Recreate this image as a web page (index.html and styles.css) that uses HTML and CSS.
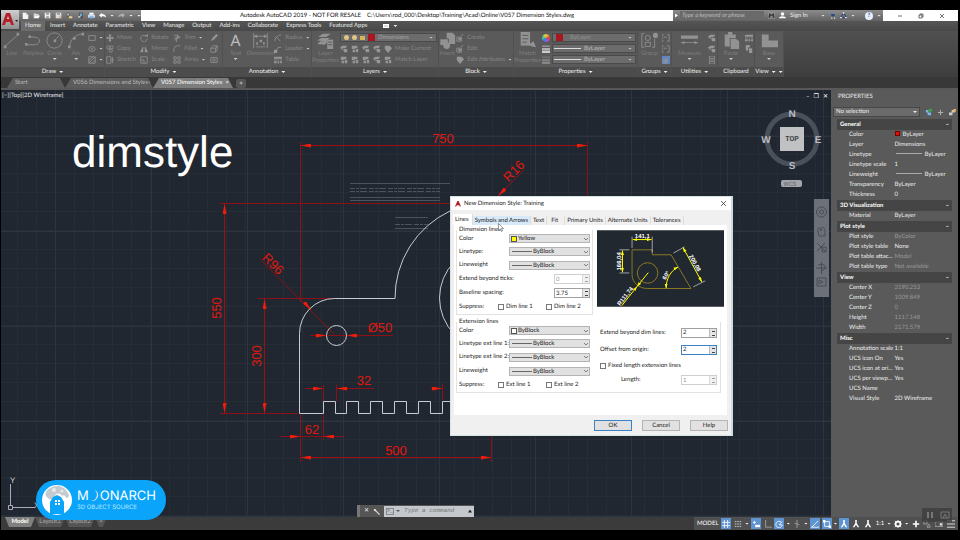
FILE: index.html
```html
<!DOCTYPE html>
<html lang="en">
<head>
<meta charset="utf-8">
<title>Autodesk AutoCAD 2019</title>
<link rel="stylesheet" href="styles.css">
</head>
<body>
<svg class="sprite" aria-hidden="true">
  <symbol id="i-new" viewBox="0 0 10 10"><path d="M1 1h5l3 3v6H1z" fill="#f4f4f4"/><path d="M6 1v3h3" fill="#aaa"/></symbol>
  <symbol id="i-open" viewBox="0 0 10 10"><path d="M1 2h3l1 1h3v2H3L1 9z" fill="#ddd"/><path d="M3 5h7L8 9H1z" fill="#fff"/></symbol>
  <symbol id="i-save" viewBox="0 0 10 10"><path d="M1 1h8v8H1z" fill="#eee"/><path d="M3 1h4v3H3zM3 6h4v3H3z" fill="#999"/></symbol>
  <symbol id="i-saveas" viewBox="0 0 10 10"><path d="M1 1h8v8H1z" fill="#ddd"/><path d="M3 1h4v3H3z" fill="#999"/><path d="M5 8l4-4 1 1-4 4z" fill="#d7a46c"/></symbol>
  <symbol id="i-web" viewBox="0 0 10 10"><path d="M1 1h4v6H1z" fill="#555"/><path d="M4 6h5v3H4z" fill="#e8c890"/><path d="M2 2h2v3H2z" fill="#ddd"/></symbol>
  <symbol id="i-mobile" viewBox="0 0 10 10"><path d="M3 1h5v8H3z" fill="#444"/><path d="M4 2h3v4H4z" fill="#70aee0"/><path d="M2 6h3v2H2z" fill="#eee"/></symbol>
  <symbol id="i-print" viewBox="0 0 10 10"><path d="M2 1h6v3H2z" fill="#fff"/><path d="M0 4h10v4H0z" fill="#d5dde8"/><path d="M2 6h6v3H2z" fill="#7eb0e8"/></symbol>
  <symbol id="i-undo" viewBox="0 0 10 10"><path d="M0 5l4-4v2c4 0 6 2 6 5-2-2-3-2-6-2v2z" fill="currentColor"/></symbol>
  <symbol id="i-line" viewBox="0 0 20 20"><path d="M2 17L18 3" class="st"/><path d="M1 16h3v3H1zM16 1h3v3h-3z" class="fl"/></symbol>
  <symbol id="i-pline" viewBox="0 0 20 20"><path d="M1 15h10c8 0 8-9 0-9H6" class="st"/><path d="M0 13h3v3H0zM4 4h3v3H4z" class="fl"/></symbol>
  <symbol id="i-circle" viewBox="0 0 20 20"><circle cx="10" cy="10" r="9" class="st"/><path d="M10 10l5-5" class="st"/><path d="M9 9h3v3H9z" class="fl"/></symbol>
  <symbol id="i-arc" viewBox="0 0 20 20"><path d="M2 18C2 9 8 3 18 2" class="st"/><path d="M0 16h3v3H0zM6 6h3v3H6zM16 1h3v3h-3z" class="fl"/></symbol>
  <symbol id="i-rect" viewBox="0 0 10 10"><path d="M1 2h8v6H1z" class="st"/></symbol>
  <symbol id="i-ellipse" viewBox="0 0 10 10"><ellipse cx="5" cy="5" rx="4" ry="3" class="st"/><path d="M4 4h2v2H4z" class="fl"/></symbol>
  <symbol id="i-hatch" viewBox="0 0 10 10"><path d="M1 1h8v8H1zM1 6l5-5M1 9l8-8M5 9l4-4" class="st"/></symbol>
  <symbol id="i-move" viewBox="0 0 10 10"><path d="M5 0l2 2H6v2h2V3l2 2-2 2V6H6v2h1l-2 2-2-2h1V6H2v1L0 5l2-2v1h2V2H3z" class="fl"/></symbol>
  <symbol id="i-copy" viewBox="0 0 10 10"><circle cx="3" cy="3" r="2" class="st"/><circle cx="7" cy="3" r="2" class="st"/><circle cx="6" cy="7" r="2" class="st"/></symbol>
  <symbol id="i-stretch" viewBox="0 0 10 10"><path d="M1 1h5v8H1zM6 5h4M8 1v8" class="st"/></symbol>
  <symbol id="i-rotate" viewBox="0 0 10 10"><path d="M8 3a4 4 0 1 0 1 3" class="st"/><path d="M6 3h4V0z" class="fl"/></symbol>
  <symbol id="i-mirror" viewBox="0 0 10 10"><path d="M4 1v8H0zM6 1v8h4z" class="fl"/></symbol>
  <symbol id="i-scale" viewBox="0 0 10 10"><path d="M1 1h8v8H1zM1 5h4v4" class="st"/></symbol>
  <symbol id="i-trim" viewBox="0 0 10 10"><path d="M1 1l8 3M1 5h8M6 0L4 10M2 8l6-5" class="st"/></symbol>
  <symbol id="i-fillet" viewBox="0 0 10 10"><path d="M1 9V6c0-3 2-5 5-5h3" class="st"/></symbol>
  <symbol id="i-array" viewBox="0 0 10 10"><path d="M1 1h3v3H1zM6 1h3v3H6zM1 6h3v3H1zM6 6h3v3H6z" class="st"/></symbol>
  <symbol id="i-erase" viewBox="0 0 10 10"><path d="M1 9l2-4 5-5 2 2-5 5z" class="fl"/></symbol>
  <symbol id="i-box" viewBox="0 0 10 10"><path d="M1 4h6v5H1zM1 4l3-3h5v5L7 9M7 4l2-3" class="st"/></symbol>
  <symbol id="i-offset" viewBox="0 0 10 10"><path d="M1 2h8v6H1zM3 4h4M3 6h4" class="st"/></symbol>
  <symbol id="i-dim" viewBox="0 0 20 20"><path d="M2 1v18M18 1v18M2 5h16" class="st"/><path d="M2 5l4-2v4zM18 5l-4-2v4zM5 12h2v3H5zM9 9h3v3H9zM13 12h2v3h-2zM5 17h11v1H5z" class="fl"/></symbol>
  <symbol id="i-leader" viewBox="0 0 10 10"><path d="M2 8l3-5h4" class="st"/><path d="M0 6h4v4H0z" class="fl"/></symbol>
  <symbol id="i-radius" viewBox="0 0 10 10"><path d="M1 9c0-4 3-7 8-8M2 3l6 6" class="st"/></symbol>
  <symbol id="i-table" viewBox="0 0 10 10"><path d="M0 1h10v8H0z" class="fl"/><path d="M0 4h10M0 6h10M4 4v5M7 4v5" stroke="#555"/></symbol>
  <symbol id="i-layers" viewBox="0 0 20 20"><path d="M1 6l6-4h9l-5 4zM0 10l5-3h10l-4 4zM0 14l4-3h9l-4 4z" class="fl"/><path d="M12 9h7v11h-7z" class="fl"/><path d="M13 12h5M13 15h5" stroke="#555"/></symbol>
  <symbol id="i-lay" viewBox="0 0 10 10"><path d="M0 3l3-2h6L7 4H3v3z" class="fl"/><path d="M4 5h5v4H5z" class="fl"/></symbol>
  <symbol id="i-lay2" viewBox="0 0 10 10"><path d="M1 1h7v3H6L4 5H1z" class="fl"/><path d="M2 6h3v3H2zM6 5h3v4H6z" class="fl"/></symbol>
  <symbol id="i-insert" viewBox="0 0 20 20"><path d="M9 1h7l3 3v10H9z" class="fl"/><path d="M1 8h10v8H1z" class="fl" stroke="#555"/><circle cx="9" cy="16" r="4" class="fl"/></symbol>
  <symbol id="i-create" viewBox="0 0 10 10"><path d="M1 4h6v5H1zM6 3l3-3" class="st"/><path d="M3 5h3v3H3z" class="fl"/></symbol>
  <symbol id="i-tag" viewBox="0 0 10 10"><path d="M1 1h6l3 3-5 6-4-5z" class="fl"/></symbol>
  <symbol id="i-match" viewBox="0 0 20 20"><path d="M2 0h11v16H2z" class="fl"/><path d="M4 4h7M4 8h7M4 12h5" stroke="#555"/><path d="M11 15l6-4 3 7-5-1z" class="fl"/></symbol>
  <symbol id="i-wheel" viewBox="0 0 10 10"><path d="M5 5V0a5 5 0 0 1 4.300 2.500z" fill="#f3a73b"/><path d="M5 5l4.300-2.500a5 5 0 0 1 0 5z" fill="#e5483c"/><path d="M5 5l4.300 2.500A5 5 0 0 1 5 10z" fill="#b84bd0"/><path d="M5 5v5a5 5 0 0 1-4.300-2.500z" fill="#3c7be8"/><path d="M5 5L.7 7.500a5 5 0 0 1 0-5z" fill="#3cc3a6"/><path d="M5 5L.7 2.500A5 5 0 0 1 5 0z" fill="#b9db4a"/></symbol>
  <symbol id="i-bars" viewBox="0 0 10 10"><path d="M0 1h10v1H0zM0 4h10v2H0zM0 7h10v3H0z" class="fl"/></symbol>
  <symbol id="i-group" viewBox="0 0 20 20"><path d="M4 2H1v16h3M13 18h3V8" class="st"/><circle cx="8" cy="7" r="3" class="st"/><path d="M5 12h6v5H5z" class="st"/><circle cx="17" cy="4" r="3" class="fl"/></symbol>
  <symbol id="i-brk" viewBox="0 0 10 10"><path d="M2 1H0v8h2M6 1h3v8H6M2 4h4" class="st"/></symbol>
  <symbol id="i-measure" viewBox="0 0 20 20"><path d="M0 4h20v4H0zM0 12h20v1H0z" class="fl"/><path d="M0 12.500l4-2v4zM20 12.500l-4-2v4z" class="fl"/></symbol>
  <symbol id="i-calc" viewBox="0 0 10 10"><path d="M2 0h6v10H2zM3 3h4M3 5h4M3 7h4" class="st"/></symbol>
  <symbol id="i-paste" viewBox="0 0 20 20"><path d="M2 3h4V0h5v3h4v4H8v10H2z" class="fl"/><path d="M9 8h6l4 3v9H9z" class="fl"/></symbol>
  <symbol id="i-cp" viewBox="0 0 10 10"><path d="M1 0h5v3H4v4H1z" class="fl"/><path d="M5 4h3l1 1v5H5z" class="fl"/></symbol>
  <symbol id="i-base" viewBox="0 0 20 20"><path d="M1 3h8v7h11v8H1z" class="fl"/></symbol>
  <symbol id="i-chev" viewBox="0 0 6 6"><path d="M1 2l2 2 2-2" fill="none" stroke="#666" stroke-width=".8"/></symbol>
  <symbol id="i-person" viewBox="0 0 10 10"><circle cx="5" cy="3" r="2.500" fill="#fff"/><path d="M0 9c0-4 10-4 10 0z" fill="#fff"/></symbol>
  <symbol id="i-binoc" viewBox="0 0 10 10"><path d="M1 1h3v2h2V1h3l1 8H6V6H4v3H0z" fill="#3a3a3a" stroke="#ddd" stroke-width=".6"/></symbol>
  <symbol id="i-cart" viewBox="0 0 10 10"><path d="M0 1h2l1 1h7L8 7H3L2 3z" fill="#2f4b6d" stroke="#ccc" stroke-width=".5"/><circle cx="4" cy="9" r="1" fill="#ddd"/><circle cx="8" cy="9" r="1" fill="#ddd"/></symbol>
  <symbol id="i-tri" viewBox="0 0 10 10"><path d="M5 1l4 7H1z" fill="none" stroke="#26466f" stroke-width="1.500"/><path d="M4 0h2v3H4zM0 7h3v2H0zM7 7h3v2H7z" fill="#ddd"/></symbol>
  <symbol id="i-ann" viewBox="0 0 10 10"><path d="M4 0h2v4l3 5H7L5 6 3 9H1l3-5z" fill="#fff"/></symbol>
</svg>

<div class="app">
  <header class="head">
    <button class="app-btn" aria-label="Application menu">
      <svg viewBox="0 0 18 18"><path d="M1 14L5 2h4l4 12h-3l-1-3H5l-1 3z" fill="#b3202b"/><path d="M6 8h2L7 5z" fill="#ddd"/><path d="M14 9h3l-1 2z" fill="#222"/></svg>
    </button>
    <div class="titlebar">
      <div class="qat">
        <svg><use href="#i-new"/></svg><svg><use href="#i-open"/></svg><svg><use href="#i-save"/></svg><svg><use href="#i-saveas"/></svg><svg><use href="#i-web"/></svg><svg><use href="#i-mobile"/></svg><svg><use href="#i-print"/></svg><svg><use href="#i-undo"/></svg><i class="dd"></i><svg class="off flip"><use href="#i-undo"/></svg><i class="dd"></i><i class="dd"></i>
      </div>
      <h1 class="doc-title"><span>Autodesk AutoCAD 2019 - NOT FOR RESALE</span><span>C:\Users\rod_000\Desktop\Training\Acad\Online\V057 Dimension Styles.dwg</span></h1>
      <div class="info">
        <i class="go"></i>
        <input class="keyword" aria-label="Search help" placeholder="Type a keyword or phrase">
        <svg><use href="#i-binoc"/></svg><svg><use href="#i-person"/></svg><span class="signin">Sign In</span><i class="dd"></i>
        <svg><use href="#i-cart"/></svg><svg><use href="#i-tri"/></svg><i class="dd"></i>
        <b class="help">?</b><i class="dd"></i>
      </div>
      <div class="winbtns">
        <button aria-label="Minimize"><svg viewBox="0 0 6 6"><path d="M1 3h4" class="wk"/></svg></button>
        <button aria-label="Restore"><svg viewBox="0 0 6 6"><path d="M1 2h3v3H1zM2 2V1h3v3H4" class="wk"/></svg></button>
        <button aria-label="Close"><svg viewBox="0 0 6 6"><path d="M1 1l4 4M5 1L1 5" class="wk"/></svg></button>
      </div>
    </div>
    <nav class="rtabs">
      <a class="on" href="#">Home</a><a href="#">Insert</a><a href="#">Annotate</a><a href="#">Parametric</a><a href="#">View</a><a href="#">Manage</a><a href="#">Output</a><a href="#">Add-ins</a><a href="#">Collaborate</a><a href="#">Express Tools</a><a href="#">Featured Apps</a><i class="cam"></i><i class="dd"></i>
    </nav>
  </header>

  <div class="ribbon">
    <section class="panel"><div class="tools">
      <button class="big"><svg><use href="#i-line"/></svg>Line</button>
      <button class="big"><svg><use href="#i-pline"/></svg>Polyline</button>
      <button class="big"><svg><use href="#i-circle"/></svg>Circle<i class="dd"></i></button>
      <button class="big"><svg><use href="#i-arc"/></svg>Arc<i class="dd"></i></button>
      <div class="col"><button><svg><use href="#i-rect"/></svg><i class="dd"></i></button><button><svg><use href="#i-ellipse"/></svg><i class="dd"></i></button><button><svg><use href="#i-hatch"/></svg><i class="dd"></i></button></div>
    </div><h2>Draw<i class="dd"></i></h2></section>
    <section class="panel"><div class="tools spread">
      <div class="col"><button><svg><use href="#i-move"/></svg>Move</button><button><svg><use href="#i-copy"/></svg>Copy</button><button><svg><use href="#i-stretch"/></svg>Stretch</button></div>
      <div class="col"><button><svg><use href="#i-rotate"/></svg>Rotate</button><button><svg><use href="#i-mirror"/></svg>Mirror</button><button><svg><use href="#i-scale"/></svg>Scale</button></div>
      <div class="col"><button><svg><use href="#i-trim"/></svg>Trim<i class="dd"></i></button><button><svg><use href="#i-fillet"/></svg>Fillet<i class="dd"></i></button><button><svg><use href="#i-array"/></svg>Array<i class="dd"></i></button></div>
      <div class="col"><button><svg><use href="#i-erase"/></svg></button><button><svg><use href="#i-box"/></svg></button><button><svg><use href="#i-offset"/></svg></button></div>
    </div><h2>Modify<i class="dd"></i></h2></section>
    <section class="panel"><div class="tools">
      <button class="big"><b class="glyph">A</b>Text<i class="dd"></i></button>
      <button class="big"><svg><use href="#i-dim"/></svg>Dimension</button>
      <div class="col"><button><svg><use href="#i-radius"/></svg>Radius<i class="dd"></i></button><button><svg><use href="#i-leader"/></svg>Leader<i class="dd"></i></button><button><svg><use href="#i-table"/></svg>Table</button></div>
    </div><h2>Annotation<i class="dd"></i></h2></section>
    <section class="panel"><div class="tools">
      <button class="big"><svg><use href="#i-layers"/></svg>Layer<br>Properties</button>
      <div class="col grow layers">
        <div class="rcombo layer"><i class="bulb"></i><i class="bulb"></i><i class="lock"></i><i class="red"></i><select aria-label="Layer"><option>Dimensions</option></select><i class="dd"></i></div>
        <div class="row"><svg><use href="#i-lay"/></svg><svg><use href="#i-lay2"/></svg><svg><use href="#i-lay"/></svg><svg><use href="#i-lay"/></svg><svg><use href="#i-tag"/></svg>Make Current</div>
        <div class="row"><svg><use href="#i-lay2"/></svg><svg><use href="#i-lay2"/></svg><svg><use href="#i-lay2"/></svg><svg><use href="#i-lay"/></svg><svg><use href="#i-lay2"/></svg>Match Layer</div>
      </div>
    </div><h2>Layers<i class="dd"></i></h2></section>
    <section class="panel"><div class="tools">
      <button class="big"><svg><use href="#i-insert"/></svg>Insert</button>
      <div class="col"><button><svg><use href="#i-create"/></svg>Create</button><button><svg><use href="#i-create"/></svg>Edit</button><button><svg><use href="#i-tag"/></svg>Edit Attributes<i class="dd"></i></button></div>
    </div><h2>Block<i class="dd"></i></h2></section>
    <section class="panel"><div class="tools">
      <button class="big"><svg><use href="#i-match"/></svg>Match<br>Properties</button>
      <div class="col lit"><svg><use href="#i-wheel"/></svg><svg><use href="#i-bars"/></svg><svg class="off"><use href="#i-bars"/></svg></div>
      <div class="col grow">
        <div class="rcombo"><i class="red"></i><select class="faint" aria-label="Object color"><option>ByLayer</option></select><i class="dd"></i></div>
        <div class="rcombo"><i class="rule"></i><select aria-label="Lineweight"><option>ByLayer</option></select><i class="dd"></i></div>
        <div class="rcombo"><i class="rule"></i><select aria-label="Linetype"><option>ByLayer</option></select><i class="dd"></i></div>
      </div>
    </div><h2>Properties<i class="dd"></i></h2></section>
    <section class="panel"><div class="tools">
      <button class="big"><svg><use href="#i-group"/></svg>Group</button>
      <div class="col"><button><svg><use href="#i-brk"/></svg></button><button><svg><use href="#i-brk"/></svg></button><button class="sel"><svg><use href="#i-create"/></svg></button></div>
    </div><h2>Groups<i class="dd"></i></h2></section>
    <section class="panel"><div class="tools">
      <button class="big"><svg><use href="#i-measure"/></svg>Measure<i class="dd"></i></button>
      <div class="col"><button><svg><use href="#i-lay"/></svg></button><button><svg><use href="#i-lay"/></svg></button><button><svg><use href="#i-calc"/></svg></button></div>
    </div><h2>Utilities<i class="dd"></i></h2></section>
    <section class="panel"><div class="tools">
      <button class="big"><svg><use href="#i-paste"/></svg>Paste<i class="dd"></i></button>
      <div class="col"><button><svg><use href="#i-table"/></svg></button><button><svg><use href="#i-cp"/></svg></button></div>
    </div><h2>Clipboard</h2></section>
    <section class="panel"><div class="tools">
      <button class="big"><svg><use href="#i-base"/></svg>Base<i class="dd"></i></button>
    </div><h2>View<i class="dd"></i><i class="dd"></i></h2></section>
  </div>

  <nav class="ftabs">
    <a class="t-start" href="#">Start</a>
    <a class="t-doc" href="#">V056 Dimensions and Styles<span>×</span></a>
    <a class="t-doc on" href="#">V057 Dimension Styles<span>×</span></a>
    <button aria-label="New tab">+</button>
  </nav>

  <main class="work">
    <div class="canvas">
      <svg class="model" viewBox="1 90 830 427" preserveAspectRatio="xMinYMin slice">
        <defs>
          <pattern id="minor" x="55" y="154" width="19" height="19" patternUnits="userSpaceOnUse"><path d="M.5 0v19M0 .5h19" stroke="#262d37" fill="none"/></pattern>
          <pattern id="major" x="55" y="136" width="96" height="95" patternUnits="userSpaceOnUse"><path d="M.5 0v95M0 .5h96" stroke="#2c353f" fill="none"/></pattern>
          <marker id="ar" viewBox="0 0 10 4" refX="10" refY="2" markerWidth="10" markerHeight="4" markerUnits="userSpaceOnUse" orient="auto-start-reverse"><path d="M0 0l10 2-10 2z" fill="#f01c0c"/></marker>
        </defs>
        <path d="M0 90h2000v1200H0z" fill="#212730"/>
        <path d="M0 90h2000v1200H0z" fill="url(#minor)"/>
        <path d="M0 90h2000v1200H0z" fill="url(#major)"/>
        <g class="ghost"><path d="M350 183.500h100M350 197.500h90M350 200.500h90M395 217.500h33M395 228.500h33"/><path d="M350 188.500h90M350 191.500h90M395 224.500h33" stroke-dasharray="5 1 3 1 7 2"/></g>
        <g class="ext">
          <path d="M300.500 142v160M587.500 142v60M220 203.500h230M220 413.500h78M258 298.500h77M300.500 415v47M323.500 415v25M323.500 385v16M336.500 385v16M442.500 384v16M491.500 434v28"/>
          <path d="M260 259l74 75M525 169l-24 24M310 335.500h83M305 388.500h18M336 388.500h38M431 388.500h12M280 436.500h63"/>
        </g>
        <g class="dim">
          <path d="M301 145.500h286" class="both"/><path d="M224.500 204v209" class="both"/><path d="M264.500 299v114" class="both"/><path d="M301 457.500h190" class="both"/>
          <path d="M304 302l7 8"/><path d="M315 335.500h11"/><path d="M358 335.500h-11"/><path d="M313 388.500h10"/><path d="M346 388.500h-9"/><path d="M432 388.500h10"/><path d="M290 436.500h10"/><path d="M334 436.500h-10"/><path d="M510 184l-12 12"/>
        </g>
        <g class="part">
          <path d="M450 401.500h-7.500v12h-12v-12h-12v12h-12v-12h-12v12h-12v-12h-12v12h-12v-12h-12v12h-11v-12h-12v12h-24V333.500a35 35 0 0 1 35-35h60.500A96 96 0 0 1 450 211"/>
          <circle cx="491" cy="298" r="51.500"/><circle cx="336.500" cy="335.500" r="10"/>
        </g>
        <g class="dimtext">
          <text x="443" y="143">750</text><text x="396" y="455">500</text><text x="312" y="434">62</text><text x="364" y="385">32</text><text x="380" y="332">Ø50</text>
          <text transform="translate(221 308) rotate(-90)">550</text><text transform="translate(261 356) rotate(-90)">300</text>
          <text transform="translate(270 267) rotate(45)">R96</text><text transform="translate(517 174) rotate(-45)">R16</text>
        </g>
        <text x="72" y="167" class="caption">dimstyle</text>
        <g class="ucs"><path d="M10.500 505v-21M13 507.500h22M8.500 505.500h4v4h-4z"/><text x="10" y="483">Y</text><text x="34" y="508">X</text></g>
      </svg>
      <span class="vp">[−][Top][2D Wireframe]</span>
      <div class="mdi"><span>‒</span><span>❐</span><span>✕</span></div>
      <svg class="cube" viewBox="0 0 62 82">
        <circle cx="31" cy="32" r="25" fill="none" stroke="#4a505a" stroke-width="5"/>
        <path d="M19 20h24v24H19z" fill="#bfc1c3"/>
        <g class="nesw"><text x="31" y="10">N</text><text x="31" y="62">S</text><text x="5" y="36">W</text><text x="57" y="36">E</text></g>
        <text x="31" y="34" class="top">TOP</text>
        <rect x="20" y="73" width="21" height="7" rx="2" fill="#a3a6ae"/><text x="29" y="79" class="wcs">WCS</text>
      </svg>
      <svg class="navbar" viewBox="0 0 15 98"><path d="M0 0h15v98H0z" fill="#6c7179"/><g fill="none" stroke="#474d56"><circle cx="7.500" cy="13" r="5"/><circle cx="7.500" cy="13" r="2"/><path d="M4 32c0-4 2-5 3 0 0-5 3-5 4 0v5H5zM3 44l8 8M11 44l-8 8M8 48h4v5H8zM7.500 63v12M2 69h11M4 66c8-3 10 4 3 6M3 79h9v8H3zM5 81l4 2-4 2z"/></g></svg>
      <div class="cmd">
        <i class="grip"></i><span class="x">✕</span><svg viewBox="0 0 8 8"><path d="M1 1l2 0 1 2 4 4-1 1-4-4-2-1z" fill="#ddd"/></svg>
        <label><i class="prompt">&gt;_</i><i class="dd"></i><input aria-label="Command" placeholder="Type a command"><i class="up"></i></label>
      </div>

      <form class="dialog" onsubmit="return false">
        <div class="dlg-title"><svg viewBox="0 0 10 10"><path d="M0 9L4 0h2l4 9H8L7 7H3L2 9z" fill="#b3202b"/></svg><span>New Dimension Style: Training</span><button class="close" aria-label="Close"><svg viewBox="0 0 6 6"><path d="M1 1l4 4M5 1L1 5" class="wk"/></svg></button></div>
        <div class="dlg-tabs"><button class="on">Lines</button><button class="hot">Symbols and Arrows</button><button>Text</button><button class="w">Fit</button><button>Primary Units</button><button>Alternate Units</button><button>Tolerances</button></div>
        <div class="page">
          <div class="upper">
            <fieldset class="rows3"><legend>Dimension lines</legend>
              <label for="c1">Color</label><div class="combo sw"><select id="c1"><option>Yellow</option></select><i class="yellow"></i><svg><use href="#i-chev"/></svg></div>
              <label for="c2">Linetype:</label><div class="combo ln"><select id="c2"><option>ByBlock</option></select><i></i><svg><use href="#i-chev"/></svg></div>
              <label for="c3">Lineweight</label><div class="combo ln"><select id="c3"><option>ByBlock</option></select><i></i><svg><use href="#i-chev"/></svg></div>
              <label for="n1">Extend beyond ticks:</label><div class="spin off"><input id="n1" value="0" disabled><i></i></div>
              <label for="n2">Baseline spacing:</label><div class="spin"><input id="n2" value="3.75"><i></i></div>
              <div class="checks"><span>Suppress:</span><label><input type="checkbox">Dim line 1</label><label><input type="checkbox">Dim line 2</label></div>
            </fieldset>
            <svg class="preview" viewBox="447 119 384 231">
              <defs><marker id="ya" viewBox="0 0 12 8" refX="12" refY="4" markerWidth="14" markerHeight="10" markerUnits="userSpaceOnUse" orient="auto-start-reverse"><path d="M0 0l12 4-12 4z" fill="#ff0"/></marker></defs>
              <path d="M447 119h384v231H447z" fill="#212830"/>
              <path d="M553 178h61v15h57l60 102H600c-26 0-47-17-47-42z" fill="none" stroke="#8a7824" stroke-width="3"/>
              <circle cx="600" cy="248" r="31" fill="none" stroke="#8a7824" stroke-width="3"/>
              <path d="M553 138v34M614 138v48M515 178h30M515 248h30M678 188l34-19M738 290l36-18" stroke="#ddd" stroke-width="2"/>
              <g class="ydim"><path d="M555 147h57" class="both"/><path d="M524 180v66" class="both"/><path d="M707 171l57 104" class="both"/><path d="M656 294c0-28 13-52 36-64" class="both"/><path d="M522 347l46-58"/><path d="M602 247l-34 42"/></g>
              <g class="ptext"><text x="584" y="143">141,1</text><text transform="translate(520 213) rotate(-90)">166,04</text><text transform="translate(738 221) rotate(61)">200,08</text><text transform="translate(661 258) rotate(-60)">60°</text><text transform="translate(537 322) rotate(-52)">R111,74</text></g>
            </svg>
          </div>
          <fieldset class="wide"><legend>Extension lines</legend>
            <div class="rows2">
              <label for="e1">Color</label><div class="combo sw"><select id="e1"><option>ByBlock</option></select><i></i><svg><use href="#i-chev"/></svg></div>
              <label for="e2">Linetype ext line 1:</label><div class="combo ln"><select id="e2"><option>ByBlock</option></select><i></i><svg><use href="#i-chev"/></svg></div>
              <label for="e3">Linetype ext line 2:</label><div class="combo ln"><select id="e3"><option>ByBlock</option></select><i></i><svg><use href="#i-chev"/></svg></div>
              <label for="e4">Lineweight</label><div class="combo ln"><select id="e4"><option>ByBlock</option></select><i></i><svg><use href="#i-chev"/></svg></div>
              <div class="checks"><span>Suppress:</span><label><input type="checkbox">Ext line 1</label><label><input type="checkbox">Ext line 2</label></div>
            </div>
            <div class="rowsr">
              <label for="n3">Extend beyond dim lines:</label><div class="spin"><input id="n3" value="2"><i></i></div>
              <label for="n4">Offset from origin:</label><div class="spin focus"><input id="n4" value="2"><i></i></div>
              <label class="fixed"><input type="checkbox">Fixed length extension lines</label>
              <label for="n5" class="len">Length:</label><div class="spin off"><input id="n5" value="1" disabled><i></i></div>
            </div>
          </fieldset>
        </div>
        <div class="dlg-foot"><button class="ok">OK</button><button>Cancel</button><button>Help</button></div>
        <svg class="cursor" viewBox="0 0 6 9"><path d="M.5.5v7l2-1.500 1 2.500 1-.5-1-2.500H5.500z" fill="#fff" stroke="#555" stroke-width=".6"/></svg>
      </form>
    </div>

    <aside class="props">
      <h2>PROPERTIES</h2>
      <div class="pick"><div class="pickbox"><select aria-label="Selection"><option>No selection</option></select><i class="dd"></i></div><svg viewBox="0 0 8 8"><path d="M1 1h3v3H1zM3 4h4v3H3z" fill="#7bb5e8"/><path d="M4 0h4v3H4z" fill="#37a34a"/></svg><svg viewBox="0 0 8 8"><path d="M4 1v6M1 4h6" stroke="#bbb"/></svg><svg viewBox="0 0 8 8"><path d="M0 4h4v3H0zM3 1h4v3H3z" fill="#ccc"/><path d="M5 0h3v3H5z" fill="#e8b050"/></svg></div>
      <table>
        <tbody><tr class="sec"><th colspan="2">General<span>–</span></th></tr>
        <tr><th>Color</th><td><i class="chip"></i>ByLayer</td></tr><tr><th>Layer</th><td>Dimensions</td></tr><tr><th>Linetype</th><td><i class="dash"></i>ByLayer</td></tr><tr><th>Linetype scale</th><td>1</td></tr><tr><th>Lineweight</th><td><i class="dash"></i>ByLayer</td></tr><tr><th>Transparency</th><td>ByLayer</td></tr><tr><th>Thickness</th><td>0</td></tr></tbody>
        <tbody><tr class="sec"><th colspan="2">3D Visualization<span>–</span></th></tr><tr><th>Material</th><td>ByLayer</td></tr></tbody>
        <tbody><tr class="sec"><th colspan="2">Plot style<span>–</span></th></tr><tr><th>Plot style</th><td class="ro">ByColor</td></tr><tr><th>Plot style table</th><td>None</td></tr><tr><th>Plot table attac...</th><td class="ro">Model</td></tr><tr><th>Plot table type</th><td class="ro">Not available</td></tr></tbody>
        <tbody><tr class="sec"><th colspan="2">View<span>–</span></th></tr><tr><th>Center X</th><td class="ro">2190.253</td></tr><tr><th>Center Y</th><td class="ro">1009.849</td></tr><tr><th>Center Z</th><td class="ro">0</td></tr><tr><th>Height</th><td class="ro">1117.148</td></tr><tr><th>Width</th><td class="ro">2171.579</td></tr></tbody>
        <tbody><tr class="sec"><th colspan="2">Misc<span>–</span></th></tr><tr><th>Annotation scale</th><td>1:1</td></tr><tr><th>UCS icon On</th><td>Yes</td></tr><tr><th>UCS icon at ori...</th><td>Yes</td></tr><tr><th>UCS per viewp...</th><td>Yes</td></tr><tr><th>UCS Name</th><td></td></tr><tr><th>Visual Style</th><td>2D Wireframe</td></tr></tbody>
      </table>
      <div class="player"><svg viewBox="0 0 30 14"><path d="M5 4h2v6H5zM9 4h2v6H9z" fill="#777"/><path d="M19 4h8v6h-8zM21 10l2-4 2 4" fill="none" stroke="#777"/></svg></div>
    </aside>
  </main>

  <footer class="status">
    <a class="on" href="#">Model</a><a href="#">Layout1</a><a href="#">Layout2</a><a class="plus" href="#">+</a>
    <div class="sbar">
      <button class="mode">MODEL</button>
      <button class="b"><svg viewBox="0 0 10 10"><path d="M3 0v10M7 0v10M0 3h10M0 7h10" stroke="#fff"/></svg></button>
      <button><svg viewBox="0 0 10 10"><path d="M1 2h8M1 5h8M1 8h8" stroke="#ddd" stroke-dasharray="2 1"/></svg></button><i class="dd"></i>
      <button class="b"><svg viewBox="0 0 10 10"><path d="M1 3h4M3 1v4" stroke="#fff"/><path d="M4 6h6v3H4z" fill="#fff"/></svg></button>
      <button><svg viewBox="0 0 10 10"><path d="M2 0v9h8" fill="none" stroke="#aaa"/></svg></button>
      <button class="b"><svg viewBox="0 0 10 10"><path d="M8 3a4 4 0 1 0 1 3H5l4-4" fill="none" stroke="#fff"/></svg></button><i class="dd"></i>
      <button><svg viewBox="0 0 10 10"><path d="M5 0v10M2 4l6 2" stroke="#aaa"/></svg></button><i class="dd"></i>
      <button class="b"><svg viewBox="0 0 10 10"><path d="M0 9h10M1 9l8-8" fill="none" stroke="#fff"/></svg></button>
      <button class="b"><svg viewBox="0 0 10 10"><path d="M2 2h6v6H2z" fill="none" stroke="#fff"/><path d="M0 0h3v3H0zM7 7h3v3H7z" fill="#fff"/></svg></button><i class="dd"></i>
      <button class="b"><svg><use href="#i-ann"/></svg></button><button><svg><use href="#i-ann"/></svg></button><button><svg><use href="#i-ann"/></svg></button>
      <button class="ratio">1:1</button><i class="dd"></i>
      <button><svg viewBox="0 0 10 10"><circle cx="5" cy="5" r="3" fill="none" stroke="#fff" stroke-width="2"/><path d="M5 0v2M5 8v2M0 5h2M8 5h2M1 1l2 2M7 7l2 2M9 1L7 3M3 7L1 9" stroke="#fff"/></svg></button><i class="dd"></i>
      <button><svg viewBox="0 0 10 10"><path d="M5 1v8M1 5h8" stroke="#fff" stroke-width="2"/></svg></button>
      <button><svg viewBox="0 0 10 10"><path d="M1 1h4v4H1zM5 9l2-4 2 4z" fill="none" stroke="#aaa"/></svg></button>
      <button><svg viewBox="0 0 10 10"><path d="M0 2h10v6H0z" fill="none" stroke="#aaa"/><path d="M6 4h3v3H6z" fill="#ddd"/></svg></button>
      <button><svg viewBox="0 0 10 10"><path d="M0 1h10M0 5h10M0 9h10" stroke="#fff"/></svg></button>
    </div>
  </footer>
  <div class="brand">
    <svg viewBox="0 0 30 30"><circle cx="15" cy="15" r="15" fill="#fff"/><path d="M4 7c3-5 8-6 13-6 5 1 9 5 10 10-2 3-3 2-4 0s-3 1-4-1-5-2-6 1-4 5-7 2-3-3-2-6z" fill="#c4cacf"/><circle cx="12" cy="5" r="2" fill="#e8ebed"/><circle cx="20" cy="6" r="1.500" fill="#e8ebed"/><path d="M8 29V17l3-5 4-2 4 2 3 5v12z" fill="#0aa5fb"/><path d="M13 15h2v2h-2zM16 15h2v2h-2zM13 18h2v2h-2zM16 18h2v2h-2z" fill="#fff"/></svg>
    <div><strong>M<svg viewBox="0 0 8 10"><path d="M4 0a5 5 0 0 1-3 9 5 5 0 0 0 6-4 5 5 0 0 0-3-5z" fill="#e4e8ec"/></svg>ONARCH</strong><small>3D OBJECT SOURCE</small></div>
  </div>
</div>
</body>
</html>
```
FILE: styles.css
```css
* { box-sizing: border-box; }
body { margin: 0; background: #000; font: 6px/8px Lato, "Open Sans", sans-serif; color: #ececec; text-rendering: geometricPrecision; white-space: nowrap; }
a { color: inherit; text-decoration: none; }
h1, h2 { margin: 0; font: inherit; }
button, input, select { font: inherit; color: inherit; margin: 0; padding: 0; border: 0; background: none; appearance: none; min-width: 0; outline: 0; border-radius: 0; text-rendering: inherit; }
svg { display: block; }
.sprite { position: absolute; width: 0; height: 0; }
.st { fill: none; stroke: currentColor; }
.fl { fill: currentColor; }
.wk { fill: none; stroke: #333; stroke-width: .7; }
.dd { flex: none; width: 4px; height: 2px; background: currentColor; clip-path: polygon(0 0, 100% 0, 50% 100%); }

.app { position: relative; display: flex; flex-direction: column; min-height: 100vh; padding: 10px 2px 10px 1px; }

/* title bar and ribbon tabs */
.head { display: grid; grid-template: 11px 10px / 18px 1fr; background: #4a4a4a; }
.app-btn { grid-row: 1 / 3; background: linear-gradient(#cfcfcf, #8f8f8f); margin-bottom: 2px; }
.app-btn svg { width: 18px; height: 18px; }
.titlebar { display: flex; background: #fff; }
.qat { display: flex; align-items: center; gap: 4px; width: 122px; padding-left: 3px; background: linear-gradient(#8c8c8c, #626262); color: #fff; }
.qat svg { width: 7px; height: 7px; flex: none; }
.off { opacity: .4; }
.flip { transform: scaleX(-1); }
.doc-title { flex: 1; display: flex; justify-content: center; gap: 6px; color: #111; line-height: 11px; }
.info { display: flex; align-items: center; gap: 4px; width: 210px; padding-right: 2px; background: linear-gradient(#8c8c8c, #626262); }
.info svg { width: 7px; height: 7px; flex: none; }
.go { width: 3px; height: 4px; background: #fff; margin-left: 2px; clip-path: polygon(0 0, 100% 50%, 0 100%); }
.keyword { width: 84px; height: 9px; padding-left: 2px; margin-left: -2px; background: #6a6a6a; font-style: italic; }
.keyword::placeholder { color: #bcbcbc; }
.signin { margin-right: auto; }
.help { width: 8px; height: 8px; border-radius: 4px; background: #e8eefb; color: #1d4fb0; text-align: center; margin-left: 6px; }
.winbtns { display: flex; justify-content: space-around; width: 75px; padding: 0 6px; }
.winbtns svg { width: 6px; height: 6px; }
.rtabs { display: flex; align-items: center; background: linear-gradient(#555, #484848); line-height: 10px; }
.rtabs a { padding: 0 4px; }
.rtabs .on { background: #6b6b6b; margin: 0 1px 0 2px; }
.cam { width: 6px; height: 4px; background: #ddd; margin: 0 4px 0 12px; border: 1px solid #fff; }

/* ribbon panels */
.ribbon { display: grid; grid-template-columns: 104px 118px 89px 127px 75px 124px 34px 46px 37px 29px; background: linear-gradient(#505050, #3e3e3e); color: #868686; }
.panel { display: flex; flex-direction: column; height: 46px; background: #5a5a5a; border-right: 1px solid #505050; min-width: 0; }
.panel h2 { display: flex; justify-content: center; align-items: center; gap: 3px; height: 10px; background: #4c4c4c; color: #f0f0f0; }
.tools { flex: 1; display: flex; gap: 2px; padding: 1px 1px 0; min-height: 0; overflow: hidden; color: #868686; }
.tools i.dd { color: #ccc; }
.spread { justify-content: space-between; padding-right: 4px; }
.big { flex: 1; display: flex; flex-direction: column; align-items: center; line-height: 7px; color: #7e7e7e; }
.big svg, .glyph { width: 17px; height: 17px; color: #929292; margin-bottom: 1px; flex: none; }
.glyph { font: 16px/17px Roboto, sans-serif; color: #bbb; }
.big .dd { margin-top: 1px; }
.col { display: grid; grid-template-rows: repeat(3, 11px); align-items: center; }
.col button, .row { display: flex; align-items: center; gap: 3px; }
.col svg { width: 8px; height: 8px; flex: none; color: #969696; }
.sel { background: #5b84c0; }
.grow { flex: none; width: 84px; }
.layers { width: 97px; }
.lit svg { color: #ccc; }
.rcombo { display: flex; align-items: center; gap: 3px; height: 9px; padding: 0 3px; background: #6c6c6c; border: 1px solid #4a4a4a; color: #bbb; }
.rcombo select { flex: 1; height: 7px; line-height: 7px; }
.faint { color: #909090; padding-left: 4px; }
.layer select { color: #a4a4a4; }
.bulb { width: 5px; height: 5px; border-radius: 3px; background: #e3c583; }
.lock { width: 5px; height: 4px; background: #d9b35f; }
.red { width: 7px; height: 7px; background: #a81620; }
.rule { width: 27px; height: 1px; background: #ddd; margin-left: -2px; }

/* file tabs */
.ftabs { display: flex; align-items: end; height: 13px; padding-left: 6px; background: #383838; border-bottom: 2px solid #585858; }
.ftabs a { display: flex; justify-content: space-between; padding: 0 4px 0 8px; line-height: 10px; height: 10px; background: #5c5c5c; color: #bbb; clip-path: polygon(6px 0, calc(100% - 5px) 0, 100% 100%, 0 100%); }
.t-start { width: 58px; }
.t-doc { width: 88px; }
.ftabs .t-doc.on { width: 80px; background: #7d7d7d; color: #fff; }
.ftabs button { width: 10px; height: 9px; margin-left: 3px; background: #555; border-radius: 2px; }

/* work area */
.work { flex: 1; display: flex; }
.canvas { position: relative; flex: 1; min-height: 427px; background: #212730; overflow: hidden; }
.model { position: absolute; inset: 0; width: 100%; height: 100%; }
.ghost path { stroke: #4b535d; fill: none; }
.ext path { stroke: #8c1016; fill: none; }
.dim path { stroke: #9c1014; fill: none; marker-end: url(#ar); }
.dim .both { marker-start: url(#ar); }
.part path, .part circle { stroke: #c8ccd0; fill: none; }
.dimtext text { font: 13px "Liberation Sans", sans-serif; fill: #e0180f; text-anchor: middle; }
.caption { font: 44px "Liberation Sans", sans-serif; fill: #fff; }
.ucs path { stroke: #aab; fill: none; }
.ucs text { font: 8px "Liberation Sans", sans-serif; fill: #ccc; }
.vp { position: absolute; left: 1px; top: 2px; }
.mdi { position: absolute; right: 3px; top: 3px; display: flex; gap: 4px; color: #fff; }
.cube { position: absolute; right: 8px; top: 17px; width: 62px; height: 82px; }
.nesw text { font: bold 10px "Liberation Sans", sans-serif; fill: #b9bcc0; text-anchor: middle; }
.top { font: bold 7px Roboto, sans-serif; fill: #444; text-anchor: middle; }
.wcs { font: 6px Roboto, sans-serif; fill: #666; text-anchor: middle; }
.navbar { position: absolute; right: 2px; top: 109px; width: 15px; height: 98px; }
.cmd { position: absolute; left: 356px; bottom: 0; display: flex; align-items: center; gap: 4px; width: 117px; height: 12px; background: #555; }
.cmd svg { width: 7px; height: 7px; }
.cmd label { flex: 1; display: flex; align-items: center; gap: 2px; height: 11px; padding: 0 2px; background: #c4c7cc; color: #555; }
.grip { width: 3px; height: 12px; background: #777; }
.cmd input { flex: 1; width: 0; margin-left: 2px; font: italic 6px/8px "Liberation Mono", monospace; }
.cmd input::placeholder { color: #777; }
.prompt { border: 1px solid #888; font: 5px/5px "Liberation Mono", monospace; }
.up { width: 4px; height: 3px; background: #222; clip-path: polygon(50% 0, 100% 100%, 0 100%); }

/* dialog */
.dialog { position: absolute; left: 449px; top: 106px; width: 283px; background: #f0f0f0; border: 1px solid #d6e4e6; border-right: 2px solid #c9dedf; color: #222; }
.dlg-title { display: flex; align-items: center; gap: 3px; height: 13px; padding: 0 4px; background: #fff; }
.dlg-title > svg { width: 6px; height: 6px; }
.close { margin-left: auto; }
.close svg { width: 7px; height: 7px; }
.dlg-tabs { display: flex; align-items: end; height: 15px; padding: 0 2px; line-height: 9px; }
.dlg-tabs button { padding: 0 2px; border-right: 1px solid #ddd; }
.dlg-tabs .on { background: #fff; height: 11px; padding-right: 3px; }
.dlg-tabs .hot { background: #d8eaf9; }
.dlg-tabs .w { padding: 0 6px 0 4px; }
.page { margin: 0 4px 0 3px; padding: 2px 3px 22px 2px; background: #fff; }
.upper { display: flex; gap: 4px; align-items: start; }
fieldset { margin: 0; padding: 0 3px 0 2px; border: 1px solid #e2e2e2; border-top: 0; min-width: 0; }
legend { padding: 0; height: 5px; line-height: 5px; }
.rows3, .rows2 { display: grid; grid-template-columns: 50px 81px; align-items: center; }
.rows3 { width: 137px; grid-auto-rows: 14px; grid-template-rows: 13px 13px; }
.rows2 { grid-auto-rows: 14px; grid-template-rows: 13px 13px; }
.combo { display: grid; align-items: center; height: 9px; background: #e1e1e1; border: 1px solid #b4b4b4; }
.combo > * { grid-area: 1 / 1; }
.combo select { width: 100%; height: 7px; line-height: 7px; }
.sw select { padding-left: 8px; }
.ln select { padding-left: 23px; }
.combo svg { width: 6px; height: 6px; justify-self: end; pointer-events: none; }
.sw i { width: 6px; height: 6px; margin-left: 1px; border: 1px solid #555; background: #fff; }
.sw .yellow { background: #ff0; }
.ln i { width: 20px; height: 1px; margin-left: 2px; background: #666; }
.spin { display: flex; justify-self: end; width: 36px; height: 10px; border: 1px solid #a0a0a0; background: #fff; }
.spin input { width: 27px; line-height: 7px; padding-left: 1px; }
.spin i { flex: 1; background: linear-gradient(#444, #444) center 2px / 3px 1px no-repeat, linear-gradient(#444, #444) center 6px / 3px 1px no-repeat, #e4e4e4; border-left: 1px solid #bbb; }
.spin.off { opacity: .5; }
.spin.focus { border-color: #3b82c4; }
.checks { grid-column: 1 / 3; display: grid; grid-template-columns: 39px 48px 1fr; }
.checks label, .fixed { display: flex; align-items: center; gap: 2px; }
input[type=checkbox] { width: 6px; height: 6px; border: 1px solid #777; background: #fff; flex: none; }
.preview { flex: 1; height: 77px; margin-top: 3px; }
.ydim path { fill: none; stroke: #ff0; stroke-width: 3; marker-end: url(#ya); }
.ydim .both { marker-start: url(#ya); }
.ptext text { font: bold 18px "Liberation Sans", sans-serif; fill: #fff; text-anchor: middle; }
.wide { display: flex; justify-content: space-between; margin: 4px 3px 0 0; }
.rowsr { display: grid; grid-template: 17px 17px 16px 12px / 81px 36px; align-items: center; }
.fixed { grid-column: 1 / 3; }
.len { padding-left: 21px; }
.dlg-foot { display: flex; justify-content: end; gap: 10px; padding: 5px 3px 4px; }
.dlg-foot button { width: 38px; height: 11px; background: #e1e1e1; border: 1px solid #b4b4b4; line-height: 9px; }
.dlg-foot .ok { border-color: #3b82c4; }
.cursor { position: absolute; left: 47px; top: 26px; width: 6px; height: 9px; }

/* properties palette */
.props { position: relative; width: 127px; padding: 2px 2px 0; background: #5a5a5a; }
.props h2 { padding-left: 5px; line-height: 9px; }
.pick { display: flex; align-items: center; gap: 5px; margin: 6px 0 2px; }
.pickbox { display: flex; align-items: center; width: 89px; height: 10px; padding: 0 2px; background: #6b6b6b; border: 1px solid #474747; }
.pickbox select { flex: 1; }
.pick svg { width: 7px; height: 7px; flex: none; }
.props table { width: 115px; margin-left: 4px; border-collapse: collapse; table-layout: fixed; }
.props th, .props td { height: 10px; padding: 0; text-align: left; font-weight: normal; line-height: 10px; }
.props tr > th:first-child { padding-left: 12px; }
.props tr.sec > th:first-child { height: 11px; padding: 0 3px; background: #454545; font-weight: bold; color: #fff; }
.sec span { float: right; }
.ro { color: #999; }
.chip { display: inline-block; width: 5px; height: 5px; margin-right: 3px; background: #e01000; border: 1px solid #700; }
.dash { display: inline-block; width: 26px; height: 1px; margin: 0 3px 2px 1px; background: #aaa; }
.player { position: absolute; right: 6px; bottom: -5px; width: 30px; height: 14px; background: #3d3d3dcc; }

/* status bar */
.status { display: flex; height: 13px; padding-left: 4px; background: #3b3b3b; }
.status a { width: 30px; height: 10px; line-height: 10px; text-align: center; color: #aaa; background: #555; clip-path: polygon(0 0, 100% 0, calc(100% - 4px) 100%, 4px 100%); }
.status a.on { background: #808080; color: #fff; font-weight: bold; }
.status a.plus { width: 12px; }
.sbar { display: flex; align-items: center; justify-content: space-between; width: 264px; margin-left: auto; padding: 1px 2px; background: #505050; color: #fff; }
.sbar button { height: 11px; padding: 0 1px; }
.sbar svg { width: 8px; height: 8px; }
.sbar .b { background: #5f94d2; }

.brand { position: absolute; left: 36px; bottom: 20px; display: flex; align-items: center; gap: 5px; width: 130px; height: 40px; padding-left: 6px; border-radius: 20px; background: #0aa5fb; color: #fff; }
.brand > svg { width: 30px; height: 30px; }
.brand strong { display: flex; align-items: center; font: 13px/16px Inter, sans-serif; }
.brand strong svg { width: 11px; height: 12px; }
.brand small { display: block; font: 6px/8px Inter, sans-serif; color: #bfe6ff; }
```
